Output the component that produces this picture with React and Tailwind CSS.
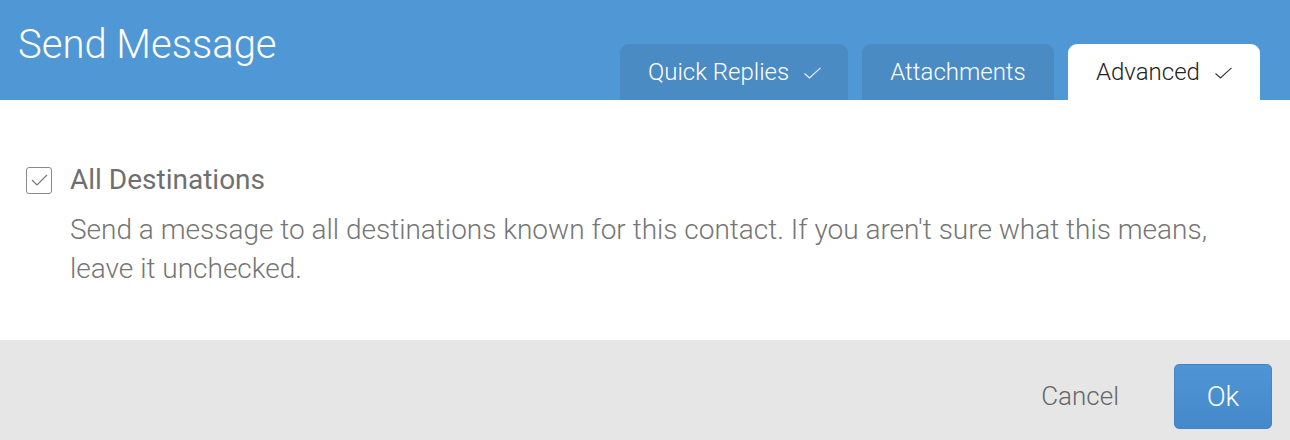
import React from "react";

const TabCheck = ({ className }) => (
  <svg viewBox="0 0 17 12" className={className} fill="none" stroke="currentColor" strokeWidth="1.1">
    <path d="M0.5 6.5 L5.5 11 L16.5 0.8" />
  </svg>
);

export default function App() {
  return (
    <div className="w-[1290px] h-[440px] bg-white flex flex-col" style={{ fontFamily: "Roboto, 'Liberation Sans', sans-serif" }}>
      <div className="h-[100px] bg-[#5097d5] flex items-stretch justify-between pl-[18px] pr-[30px]">
        <div className="text-white text-[40px] font-light leading-none pt-[25px]">Send Message</div>
        <div className="flex items-end gap-[14px]">
          <div className="h-[56px] w-[228px] rounded-t-[9px] bg-[#4a8bc4] text-white font-light text-[24px] flex items-center pl-[28px] gap-[15px]">
            <span>Quick Replies</span>
            <TabCheck className="w-[17px] h-[12px] mt-[2px] text-white/90" />
          </div>
          <div className="h-[56px] w-[192px] rounded-t-[9px] bg-[#4a8bc4] text-white font-light text-[24px] flex items-center justify-center">
            <span>Attachments</span>
          </div>
          <div className="h-[56px] w-[192px] rounded-t-[9px] bg-white text-[#222] font-light text-[24px] flex items-center pl-[28px] gap-[15px]">
            <span>Advanced</span>
            <TabCheck className="w-[17px] h-[12px] mt-[2px] text-[#333]" />
          </div>
        </div>
      </div>
      <div className="flex-1 flex flex-col pl-[26px] pt-[66px]">
        <div className="flex items-center gap-[18px]">
          <div className="w-[26px] h-[27px] border border-[#8a8a8a] rounded-[3px] text-[#777]">
            <svg viewBox="0 0 24 25" className="w-[24px] h-[25px]" fill="none" stroke="currentColor" strokeWidth="1.2">
              <path d="M5 12 L10 17 L20 7" />
            </svg>
          </div>
          <span className="text-[#6f6f6f] text-[28px] leading-none">All Destinations</span>
        </div>
        <p className="ml-[44px] mt-[16px] text-[#757575] text-[28px] font-light leading-[39px] w-[1170px]">
          Send a message to all destinations known for this contact. If you aren't sure what this means, leave it unchecked.
        </p>
      </div>
      <div className="h-[100px] bg-[#e6e6e6] flex items-start justify-end pr-[18px] pt-[24px] gap-[55px]">
        <span className="text-[#666] text-[26px] font-light leading-[65px]">Cancel</span>
        <button className="w-[98px] h-[65px] rounded-[5px] bg-gradient-to-b from-[#4f95d6] to-[#4589cb] text-white text-[28px] font-light border border-[#4585c2]">Ok</button>
      </div>
    </div>
  );
}
